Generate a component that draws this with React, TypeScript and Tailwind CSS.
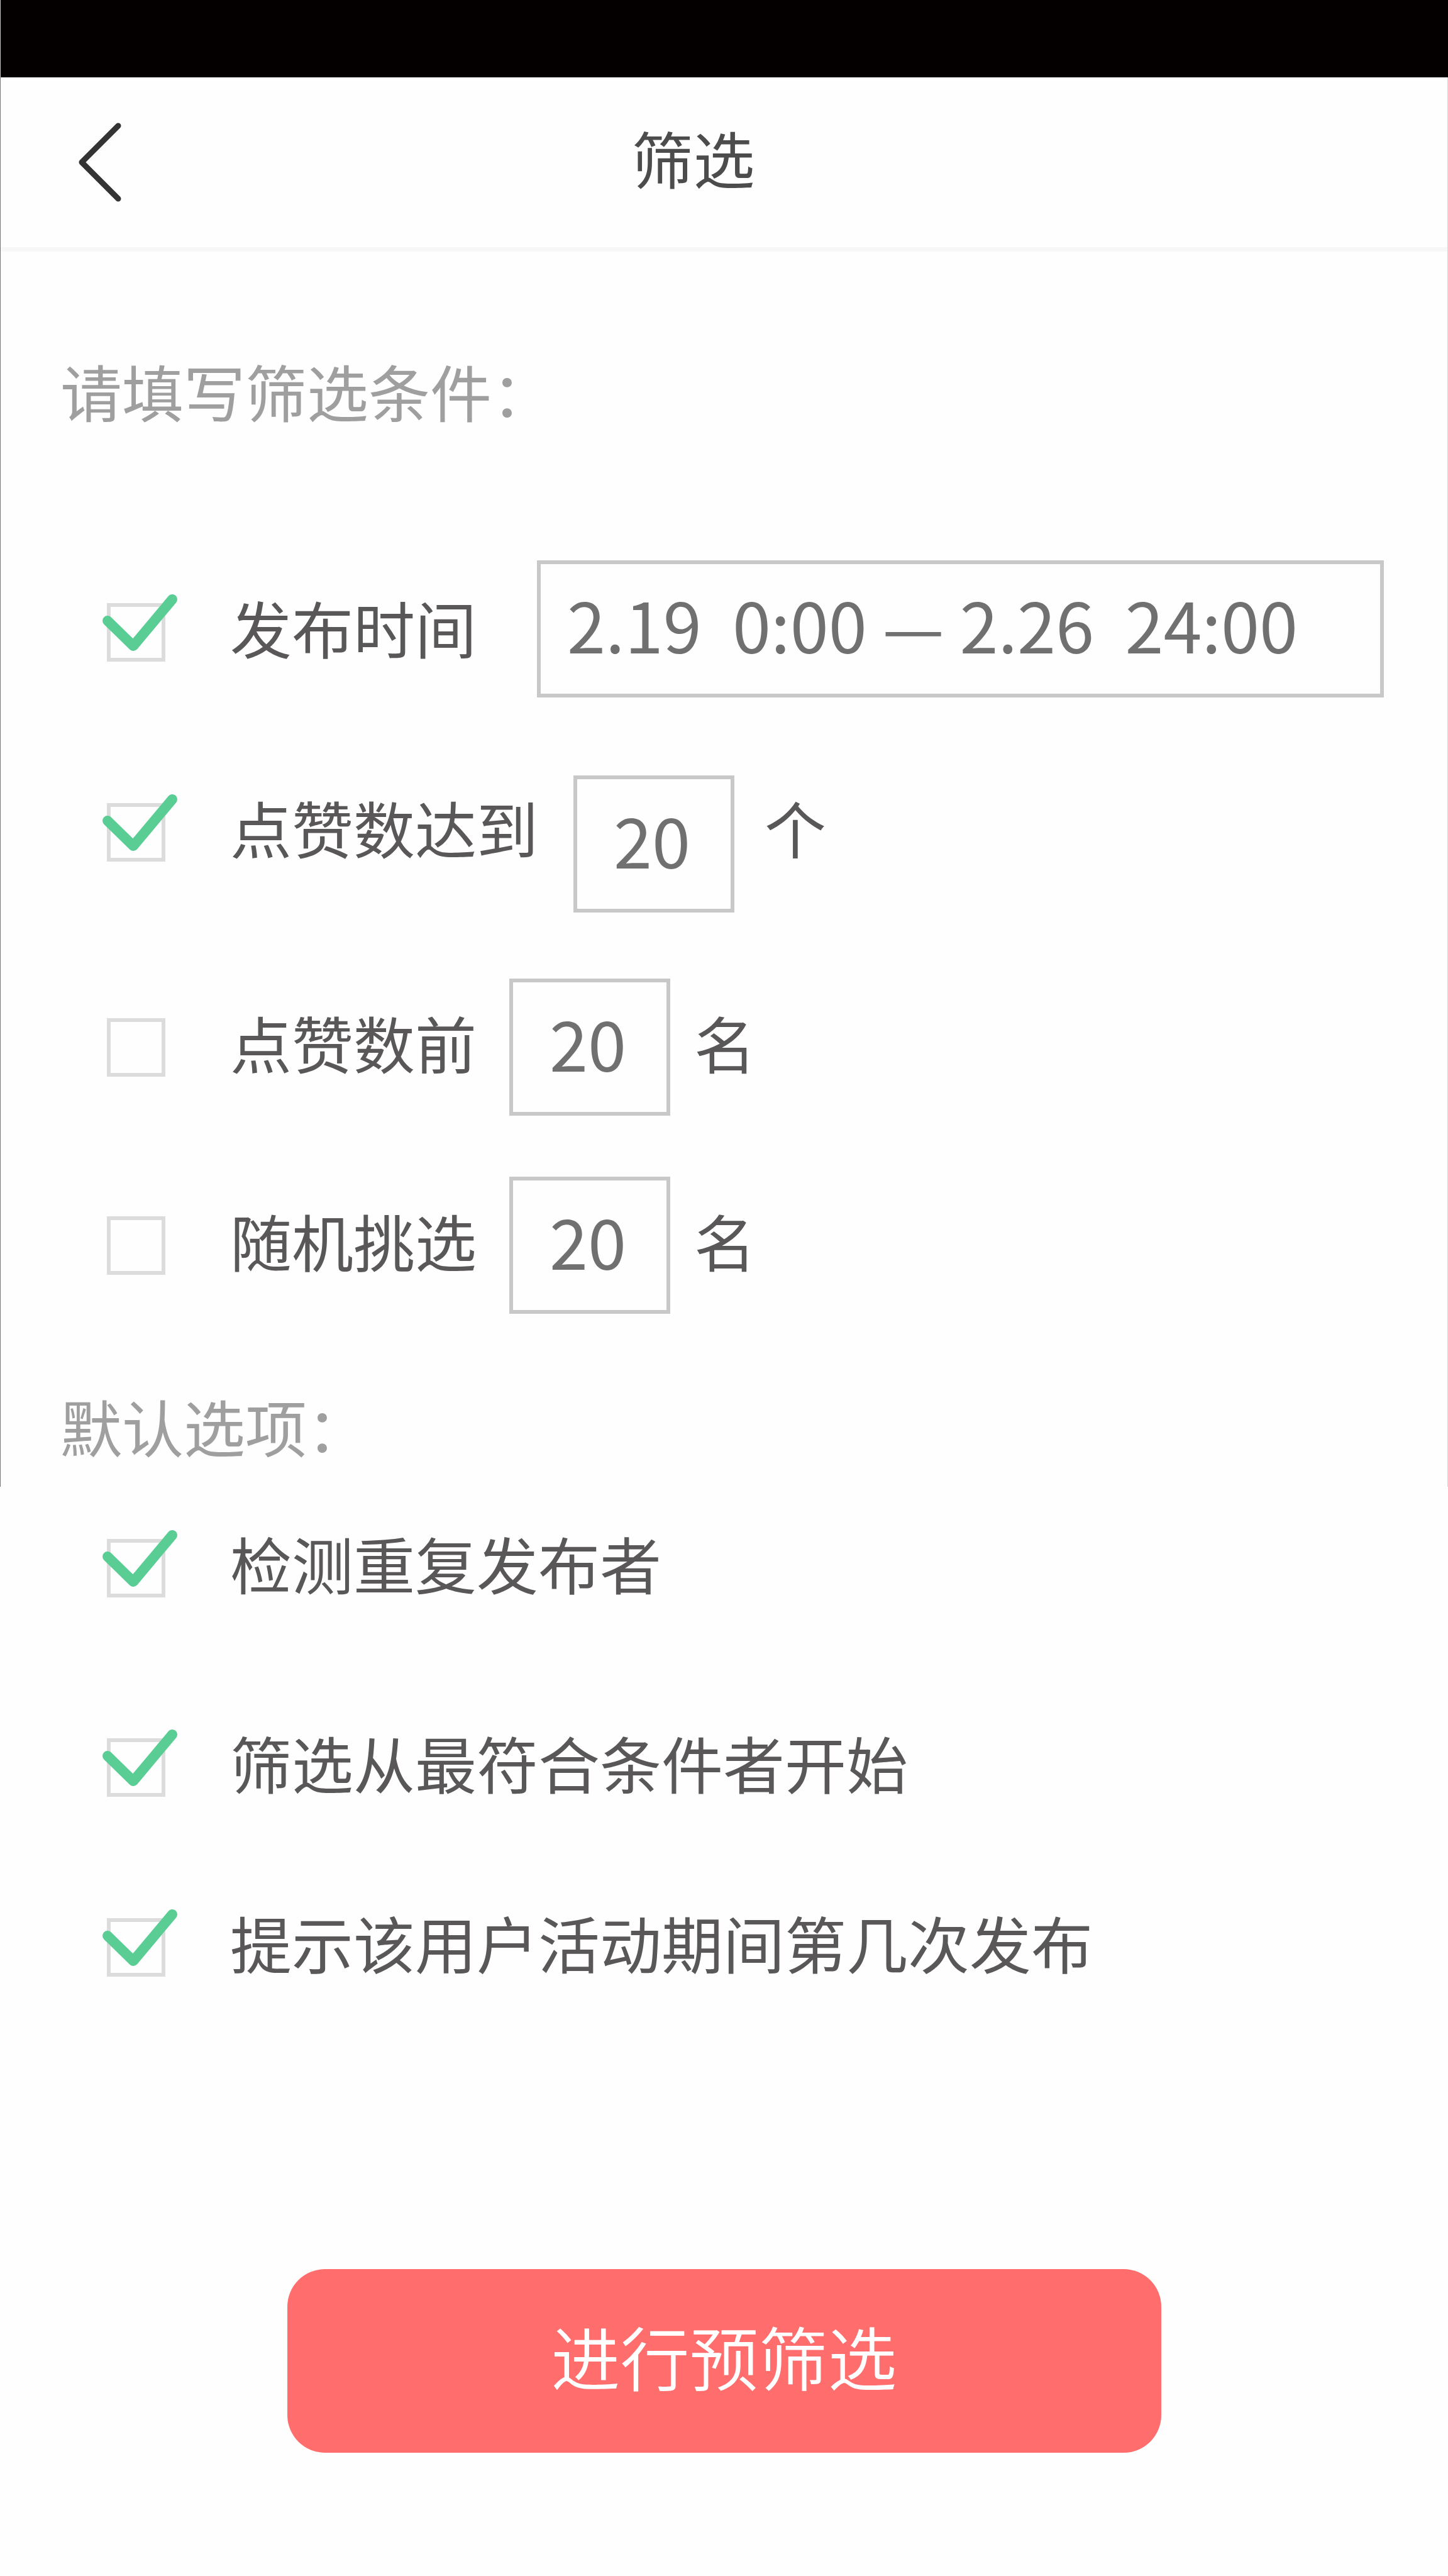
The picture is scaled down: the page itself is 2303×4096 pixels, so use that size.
import { useState, type ReactNode } from "react";

function Tick({ name, defaultChecked = false }: { name: string; defaultChecked?: boolean }) {
  const [checked, setChecked] = useState(defaultChecked);
  return (
    <span className="relative block size-[93px] shrink-0">
      <input
        id={name}
        name={name}
        type="checkbox"
        checked={checked}
        onChange={(e) => setChecked(e.target.checked)}
        className="block size-full cursor-pointer appearance-none border-[6px] border-[#dcdcdc] bg-transparent"
      />
      {checked && (
        <svg
          viewBox="0 0 93 93"
          fill="none"
          stroke="#5acd94"
          strokeWidth="16"
          strokeLinecap="round"
          strokeLinejoin="round"
          aria-hidden="true"
          className="pointer-events-none absolute inset-0 size-full overflow-visible"
        >
          <path d="M1 28 L42 68 L104 -6" />
        </svg>
      )}
    </span>
  );
}

function Choice({ name, checked, children }: { name: string; checked?: boolean; children: ReactNode }) {
  return (
    <div className="flex h-[180px] shrink-0 items-center gap-[103px]">
      <Tick name={name} defaultChecked={checked} />
      <label htmlFor={name} className="cursor-pointer pb-[18px] whitespace-nowrap">
        {children}
      </label>
    </div>
  );
}

function CountBox({ label }: { label: string }) {
  return (
    <input
      type="text"
      inputMode="numeric"
      aria-label={label}
      defaultValue="20"
      className="h-[218px] w-64 shrink-0 border-[6px] border-[#c8c8c8] bg-transparent pr-1.5 pb-[18px] text-center text-[110px] text-[#717070]"
    />
  );
}

export default function App() {
  return (
    <main className="min-h-screen bg-[#fefefe] pb-[196px] font-['Noto_Sans_CJK_SC',sans-serif] text-[98px] leading-[144px] text-[#595757]">
      <div className="h-[123px] border-l border-[#c8c8c8] bg-[#040000]" />

      <div className="border-x border-l-[#777777] border-r-[#d4d4d4] pb-5">
        <header className="flex h-[277px] items-center border-b-[7px] border-[#f7f7f7] pr-[290px] pl-[124px]">
          <button type="button" aria-label="返回" className="h-[126px] w-[68px] cursor-pointer">
            <svg
              viewBox="0 0 68 126"
              fill="none"
              stroke="#333333"
              strokeWidth="9"
              strokeLinecap="round"
              strokeLinejoin="round"
              className="size-full"
            >
              <path d="M63 5 L5 63 L63 121" />
            </svg>
          </button>
          <h1 className="flex-1 pb-[18px] text-center text-[#4c4c4c]">筛选</h1>
        </header>

        <h2 className="px-[95px] pt-[148px] pb-1.5 text-[#9f9f9f]">请填写筛选条件：</h2>

        <div className="mt-[193px] flex items-center pr-[101px] pl-[169px]">
          <div className="pt-[10px]">
            <Choice name="time" checked>
              发布时间
            </Choice>
          </div>
          <input
            type="text"
            aria-label="发布时间范围"
            defaultValue="2.19  0:00 — 2.26  24:00"
            className="ml-24 h-[218px] min-w-0 flex-1 border-[6px] border-[#c8c8c8] bg-transparent px-[42px] pb-[18px] text-[110px] text-[#717070]"
          />
        </div>

        <div className="mt-[124px] flex items-start pl-[169px]">
          <Choice name="likes" checked>
            点赞数达到
          </Choice>
          <div className="ml-14 flex gap-12">
            <CountBox label="点赞数达到" />
            <span className="leading-[162px]">个</span>
          </div>
        </div>

        <div className="mt-[105px] flex items-center pl-[169px]">
          <Choice name="top">点赞数前</Choice>
          <div className="ml-[52px] flex items-center gap-[38px]">
            <CountBox label="点赞数前" />
            <span className="pb-[18px]">名</span>
          </div>
        </div>

        <div className="mt-[97px] flex items-center pl-[169px]">
          <Choice name="random">随机挑选</Choice>
          <div className="ml-[52px] flex items-center gap-[38px]">
            <CountBox label="随机挑选" />
            <span className="pb-[18px]">名</span>
          </div>
        </div>

        <h2 className="mt-[105px] px-[95px] pb-1.5 text-[#9f9f9f]">默认选项：</h2>
      </div>

      <div className="pt-[39px] pl-[170px]">
        <Choice name="duplicate" checked>
          检测重复发布者
        </Choice>
        <div className="mt-[137px]">
          <Choice name="best" checked>
            筛选从最符合条件者开始
          </Choice>
        </div>
        <div className="mt-[106px]">
          <Choice name="times" checked>
            提示该用户活动期间第几次发布
          </Choice>
        </div>
      </div>

      <button
        type="button"
        className="mx-auto mt-[422px] block h-[292px] w-[1390px] max-w-full cursor-pointer rounded-[60px] bg-[#ff6d6d] pb-[18px] text-[110px] font-[350] text-white"
      >
        进行预筛选
      </button>
    </main>
  );
}
